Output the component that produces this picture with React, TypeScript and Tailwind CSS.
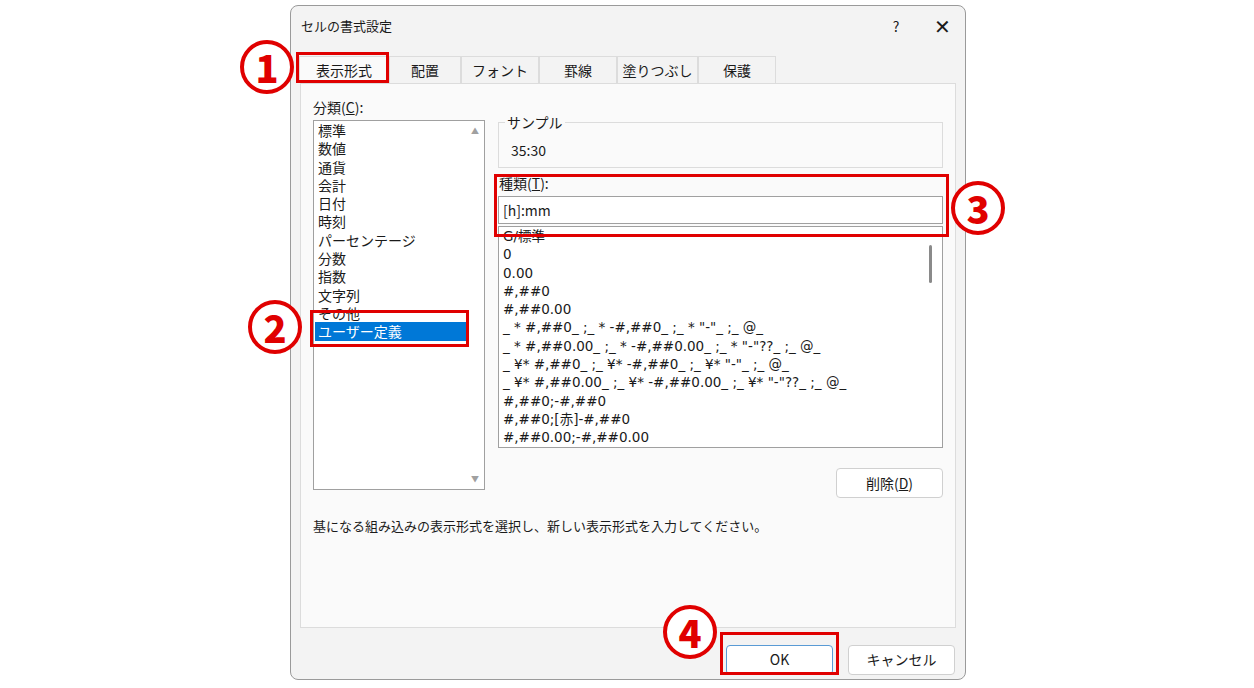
const cats = ["標準", "数値", "通貨", "会計", "日付", "時刻", "パーセンテージ", "分数", "指数", "文字列", "その他", "ユーザー定義"];
const fmts = [
  "G/標準",
  "0",
  "0.00",
  "#,##0",
  "#,##0.00",
  '_ * #,##0_ ;_ * -#,##0_ ;_ * "-"_ ;_ @_',
  '_ * #,##0.00_ ;_ * -#,##0.00_ ;_ * "-"??_ ;_ @_',
  '_ ¥* #,##0_ ;_ ¥* -#,##0_ ;_ ¥* "-"_ ;_ @_',
  '_ ¥* #,##0.00_ ;_ ¥* -#,##0.00_ ;_ ¥* "-"??_ ;_ @_',
  "#,##0;-#,##0",
  "#,##0;[赤]-#,##0",
  "#,##0.00;-#,##0.00",
];
const tabs = ["表示形式", "配置", "フォント", "罫線", "塗りつぶし", "保護"];
const tabW = [90, 72, 78, 78, 81, 78];

function Num({ n, className }: { n: string; className: string }) {
  return (
    <div className={`absolute flex h-[54px] w-[54px] items-center justify-center rounded-full border-[4px] border-[#e00000] bg-white text-[38px] font-black leading-none text-[#e00000] ${className}`}>
      {n}
    </div>
  );
}

export default function App() {
  return (
    <div className="relative h-[688px] w-[1254px] bg-white text-[14px] text-[#1a1a1a]" style={{ fontFamily: '"Noto Sans CJK JP", "Liberation Sans", sans-serif' }}>
      <div className="absolute left-[290px] top-[5px] flex h-[675px] w-[676px] flex-col rounded-lg border border-[#9a9a9a] bg-[#f3f3f3]">
        {/* title bar */}
        <div className="flex h-[40px] items-center pl-[10px]">
          <span className="flex-1 text-[13px]">セルの書式設定</span>
          <span className="w-[46px] text-center text-[14px]">?</span>
          <span className="w-[46px] text-center text-[20px] font-light">✕</span>
        </div>
        {/* tabs */}
        <div className="ml-[8px] mt-[10px] flex h-[27px] items-end">
          {tabs.map((t, i) => (
            <div
              key={t}
              style={{ width: tabW[i] }}
              className={`flex h-full items-center justify-center border border-b-0 border-[#dcdcdc] ${i === 0 ? "bg-[#fafafa]" : "bg-[#f3f3f3]"}`}
            >
              {t}
            </div>
          ))}
        </div>
        {/* panel */}
        <div className="mx-[9px] flex h-[545px] flex-col border border-[#dcdcdc] bg-[#fafafa] px-[12px] pt-[14px]">
          <div className="flex gap-[13px]">
            <div className="flex w-[172px] flex-col">
              <div className="mb-[4px] h-[18px] leading-[18px]">
                分類(<u>C</u>):
              </div>
              <div className="flex h-[370px] border border-[#a0a0a0] bg-white">
                <div className="flex flex-1 flex-col pl-[1px] pt-0">
                  {cats.map((c, i) => (
                    <div key={c} className={`h-[18.3px] pl-[3px] leading-[18.3px] ${i === 11 ? "bg-[#0078d7] text-white" : ""}`}>
                      {c}
                    </div>
                  ))}
                </div>
                <div className="flex w-[18px] flex-col items-center justify-between py-[4px] text-[8px] text-[#a0a0a0]">
                  <span>▲</span>
                  <span>▼</span>
                </div>
              </div>
            </div>
            <div className="flex flex-1 flex-col pt-[24px]">
              <div className="relative h-[46px] border border-[#dcdcdc]">
                <span className="absolute -top-[11px] left-[6px] bg-[#fafafa] px-[2px]">サンプル</span>
                <div className="pl-[12px] pt-[17px]">35:30</div>
              </div>
              <div className="mt-[5px] h-[20px] pl-[1px] leading-[20px]">
                種類(<u>T</u>):
              </div>
              <div className="mt-[3px] h-[28px] border border-[#a0a0a0] bg-white pl-[4px] leading-[26px]">[h]:mm</div>
              <div className="mt-[2px] flex h-[222px] border border-[#a0a0a0] bg-white">
                <div className="flex-1 overflow-hidden pl-[4px]" style={{ fontFamily: '"DejaVu Sans", "Noto Sans CJK JP", sans-serif' }}>
                  {fmts.map((f) => (
                    <div key={f} className="h-[18.3px] whitespace-pre text-[13.5px] leading-[18.3px]">
                      {f}
                    </div>
                  ))}
                </div>
                <div className="w-[22px] pt-[18px]">
                  <div className="ml-[9px] h-[38px] w-[3px] rounded bg-[#8a8a8a]" />
                </div>
              </div>
              <div className="mt-[20px] flex justify-end">
                <div className="flex h-[30px] w-[107px] items-center justify-center rounded border border-[#d0d0d0] bg-white">
                  削除(<u>D</u>)
                </div>
              </div>
            </div>
          </div>
          <div className="mt-[18px] text-[13px]">基になる組み込みの表示形式を選択し、新しい表示形式を入力してください。</div>
        </div>
        {/* footer */}
        <div className="flex flex-1 items-center justify-end gap-[15px] pr-[10px] pt-[12px]">
          <div className="flex h-[30px] w-[107px] items-center justify-center rounded border border-[#5a9bd5] bg-white">OK</div>
          <div className="flex h-[30px] w-[107px] items-center justify-center rounded border border-[#d0d0d0] bg-white">キャンセル</div>
        </div>
      </div>

      {/* annotations */}
      <div className="absolute left-[296px] top-[52px] h-[31px] w-[93px] border-[3px] border-[#e00000]" />
      <div className="absolute left-[310px] top-[310px] h-[37px] w-[159px] border-[3px] border-[#e00000]" />
      <div className="absolute left-[494px] top-[174px] h-[63px] w-[455px] border-[3px] border-[#e00000]" />
      <div className="absolute left-[720px] top-[632px] h-[43px] w-[119px] border-[3px] border-[#e00000]" />
      <Num n="1" className="left-[240px] top-[40px]" />
      <Num n="2" className="left-[248px] top-[300px]" />
      <Num n="3" className="left-[951px] top-[181px]" />
      <Num n="4" className="left-[663px] top-[605px]" />
    </div>
  );
}
